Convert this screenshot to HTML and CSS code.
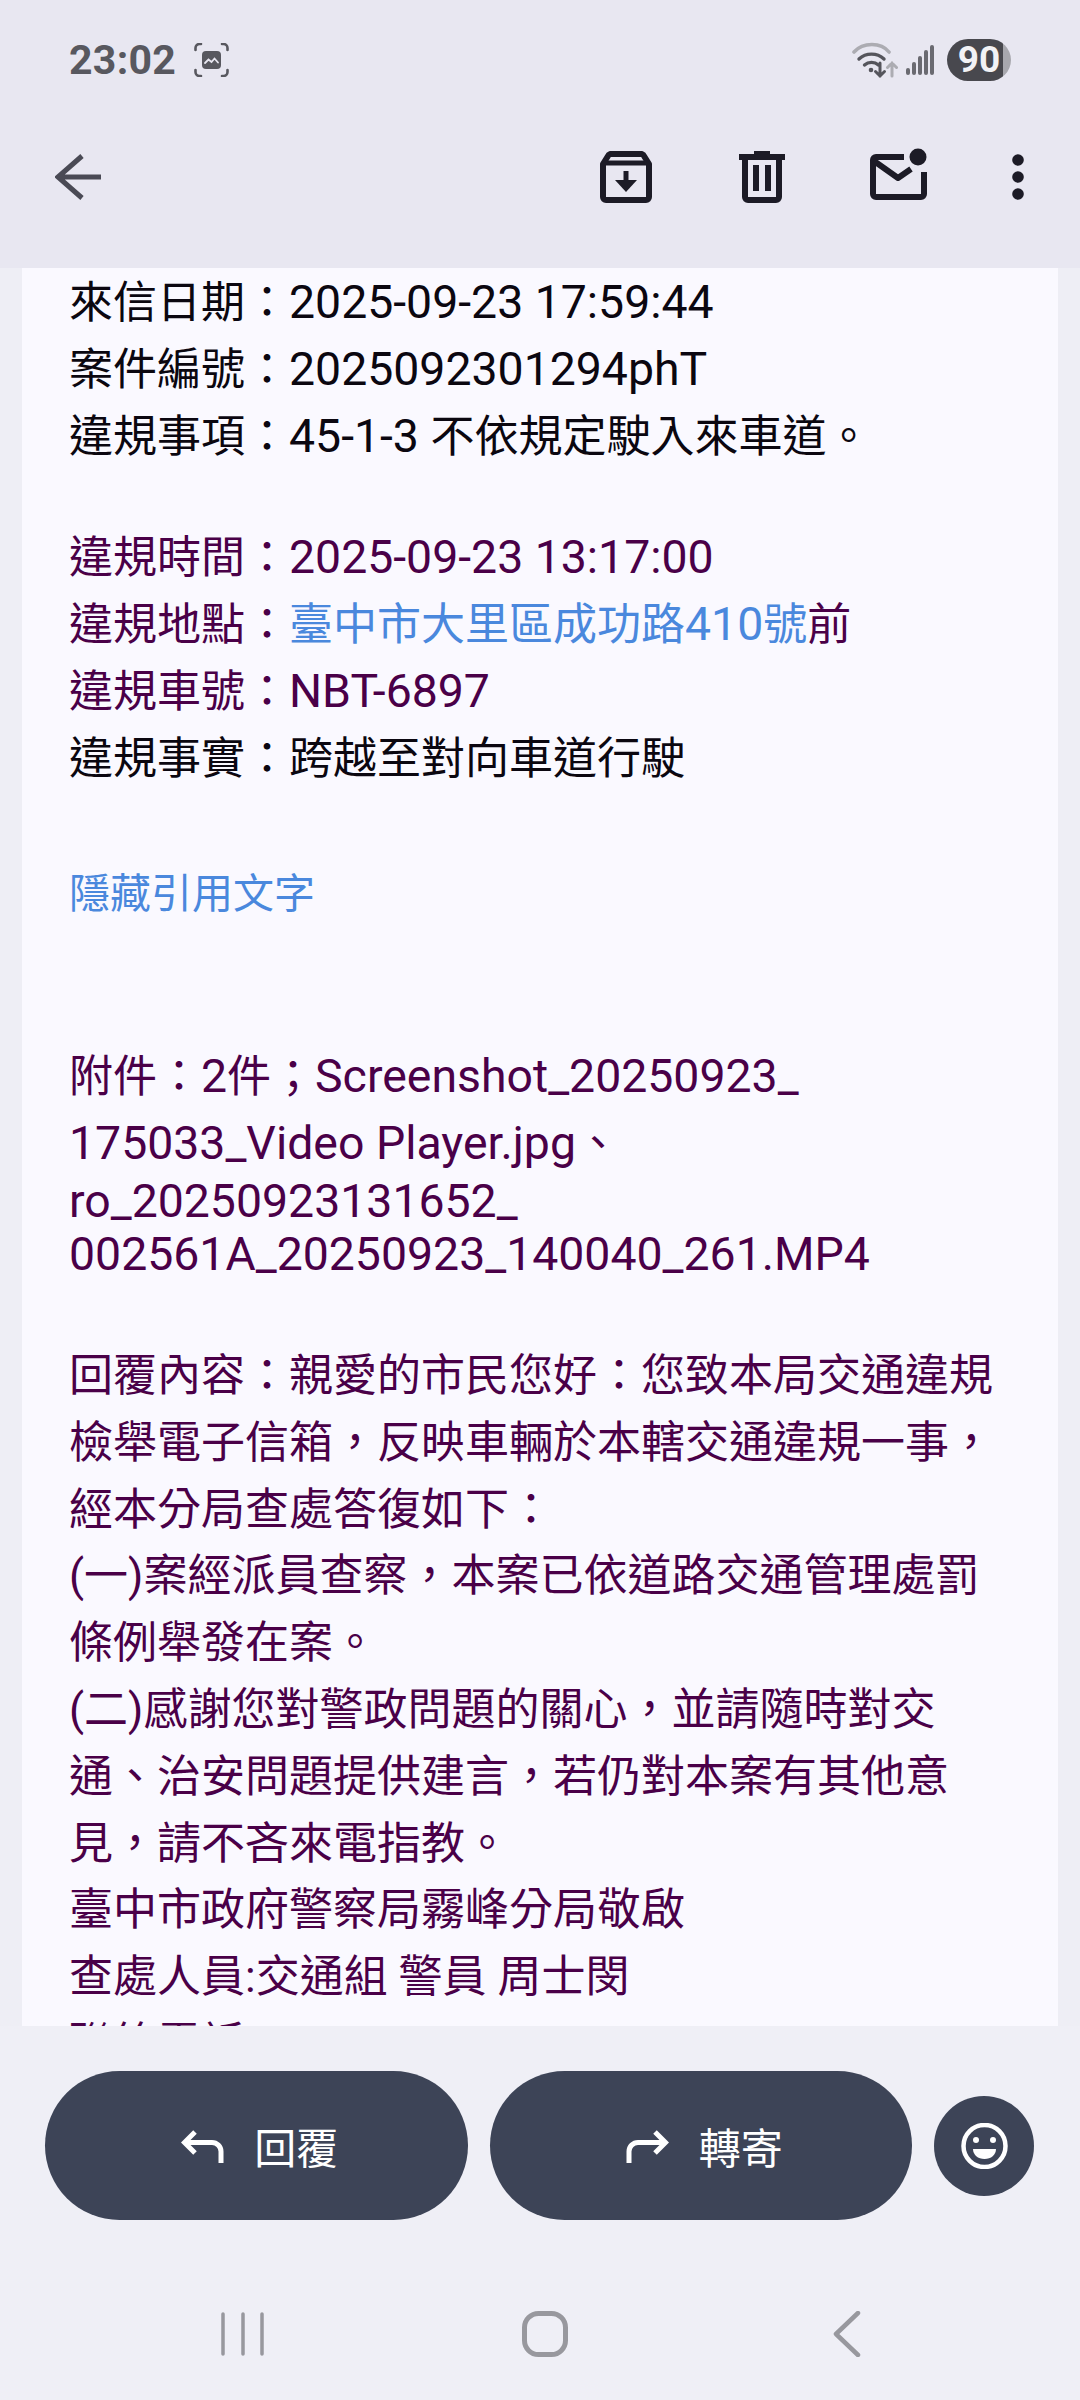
FILE: index.html
```html
<!DOCTYPE html>
<html lang="zh-Hant">
<head>
<meta charset="utf-8">
<title>郵件</title>
<link rel="stylesheet" href="styles.css">
</head>
<body>
<div class="page">
  <header class="header">
    <div class="status">
      <span class="time">23:02</span>
      <svg class="shot" width="35" height="34" viewBox="0 0 35 34" fill="none" stroke="#58585f" stroke-width="2.6" stroke-linecap="round">
        <path d="M1.500 7V5a4 4 0 0 1 4-4H7M28 1h1.500a4 4 0 0 1 4 4v2M33.500 27v2a4 4 0 0 1-4 4H28M7 33H5.500a4 4 0 0 1-4-4v-2"/>
        <rect x="8" y="8" width="19" height="18" rx="4" fill="#58585f" stroke="none"/>
        <path d="M11 20l3.500-3.500 3 2.500 3-3.500 3.500 4" stroke="#e8e7f1" stroke-width="1.800"/>
      </svg>
      <span class="status-right">
        <svg class="wifi" width="46" height="38" viewBox="0 0 46 38" fill="none" stroke-linecap="round">
          <path d="M2 11C11 1 29 1 37 11" stroke="#acacb2" stroke-width="3.600"/>
          <path d="M7 18c7-6.500 18-6.500 25 0M12.500 24c4-3.500 10-3.500 14 0" stroke="#55555c" stroke-width="3.400"/>
          <circle cx="19" cy="29" r="2.300" fill="#55555c"/>
          <path d="M28 22v13M23.500 30.500l4.500 4.500 4.500-4.500" stroke="#55555c" stroke-width="3"/>
          <path d="M40 35V22M35.500 26.500l4.500-4.500 4.500 4.500" stroke="#acacb2" stroke-width="3"/>
        </svg>
        <svg class="signal" width="28" height="30" viewBox="0 0 28 30" fill="#6a6a71">
          <rect x="0" y="23" width="4" height="7" rx="2"/>
          <rect x="6" y="17" width="4" height="13" rx="2"/>
          <rect x="12" y="11" width="4" height="19" rx="2"/>
          <rect x="18" y="5" width="4" height="25" rx="2"/>
          <rect x="24" y="0" width="4" height="30" rx="2"/>
        </svg>
        <span class="battery">90</span>
      </span>
    </div>
    <div class="toolbar">
      <svg class="back" width="46" height="46" viewBox="0 0 46 46" fill="none" stroke="#4a4a55" stroke-width="5" stroke-linejoin="miter">
        <path d="M27 2L3 23l24 21M3 23h43"/>
      </svg>
      <svg class="archive" width="52" height="52" viewBox="0 0 52 52" fill="none" stroke="#1c1b26" stroke-width="6">
        <path d="M3 13l5-8a3 3 0 0 1 2-2h32a3 3 0 0 1 2 2l5 8v33a3 3 0 0 1-3 3H6a3 3 0 0 1-3-3z" stroke-linejoin="round"/>
        <path d="M3 12h46" stroke-width="5"/>
        <path d="M26 20v16" stroke-width="5"/>
        <path d="M15 29h22L26 41z" fill="#1c1b26" stroke="none"/>
      </svg>
      <svg class="trash" width="46" height="52" viewBox="0 0 46 52" fill="none" stroke="#1c1b26" stroke-width="6">
        <path d="M0 6h46" />
        <path d="M15 2h16" stroke-width="4"/>
        <path d="M6 8v38a3 3 0 0 0 3 3h28a3 3 0 0 0 3-3V8"/>
        <path d="M17 14v26M29 14v26"/>
      </svg>
      <svg class="mail" width="57" height="52" viewBox="0 0 57 52" fill="none" stroke="#1c1b26" stroke-width="6" stroke-linejoin="round">
        <path d="M34 9H6a3 3 0 0 0-3 3v34a3 3 0 0 0 3 3h45a3 3 0 0 0 3-3V24"/>
        <path d="M4 13l24 17 13-9"/>
        <circle cx="48" cy="9" r="8.500" fill="#1c1b26" stroke="none"/>
      </svg>
      <svg class="more" width="12" height="46" viewBox="0 0 12 46" fill="#1c1b26">
        <circle cx="6" cy="6" r="5.800"/>
        <circle cx="6" cy="23" r="5.800"/>
        <circle cx="6" cy="40" r="5.800"/>
      </svg>
    </div>
  </header>

  <main class="card">
    <div class="msg">
      <p class="para dark">來信日期：<span class="lat">2025-09-23 17:59:44</span><br>案件編號：<span class="lat">2025092301294phT</span><br>違規事項：<span class="lat">45-1-3 </span>不依規定駛入來車道。</p>
      <p class="para gap-first">違規時間：<span class="lat">2025-09-23 13:17:00</span><br>違規地點：<a class="link" href="#">臺中市大里區成功路<span class="lat">410</span>號</a>前<br>違規車號：<span class="lat">NBT-6897</span><br><span class="dark">違規事實：跨越至對向車道行駛</span></p>
      <p class="para gap-67"><a class="link small" href="#">隱藏引用文字</a></p>
      <p class="para gap-118">附件：<span class="lat">2</span>件；<span class="lat">Screenshot_20250923_</span><br><span class="lat">175033_Video Player.jpg</span>、</p>
      <p class="para tight"><span class="lat">ro_20250923131652_</span><br><span class="lat">002561A_20250923_140040_261.MP4</span></p>
      <p class="para gap-reply">回覆內容：親愛的市民您好：您致本局交通違規檢舉電子信箱，反映車輛於本轄交通違規一事，經本分局查處答復如下：<br>(一)案經派員查察，本案已依道路交通管理處罰條例舉發在案。<br>(二)感謝您對警政問題的關心，並請隨時對交通、治安問題提供建言，若仍對本案有其他意見，請不吝來電指教。<br>臺中市政府警察局霧峰分局敬啟<br>查處人員:交通組 警員 周士閔<br>聯絡電話</p>
    </div>
  </main>

  <footer class="footer">
    <div class="actions">
      <button class="pill" type="button">
        <svg width="43" height="34" viewBox="0 0 43 34" fill="none" stroke="#fff" stroke-width="5">
          <path d="M14 3L3.500 13.500 14 24M3.500 13.500H31a9 9 0 0 1 9 9V34"/>
        </svg>
        <span>回覆</span>
      </button>
      <button class="pill" type="button">
        <svg width="43" height="34" viewBox="0 0 43 34" fill="none" stroke="#fff" stroke-width="5">
          <path d="M29 3l10.500 10.500L29 24M39.500 13.500H12a9 9 0 0 0-9 9V34"/>
        </svg>
        <span>轉寄</span>
      </button>
      <button class="round" type="button" aria-label="表情">
        <svg width="47" height="46" viewBox="0 0 47 46" fill="none">
          <circle cx="23.500" cy="23" r="21" stroke="#fff" stroke-width="4.500"/>
          <circle cx="15" cy="17" r="3" fill="#fff"/>
          <circle cx="32" cy="17" r="3" fill="#fff"/>
          <path d="M12 26h23c0 6-5 10-11.500 10S12 32 12 26z" fill="#fff"/>
        </svg>
      </button>
    </div>
    <nav class="nav">
      <svg width="44" height="44" viewBox="0 0 44 44" fill="none" stroke="#98989e" stroke-width="3.500" stroke-linecap="round">
        <path d="M2 2v40M22 2v40M41 2v40"/>
      </svg>
      <svg width="46" height="46" viewBox="0 0 46 46" fill="none" stroke="#98989e" stroke-width="5">
        <rect x="2.500" y="2.500" width="41" height="41" rx="14"/>
      </svg>
      <svg width="28" height="46" viewBox="0 0 28 46" fill="none" stroke="#98989e" stroke-width="4.500" stroke-linecap="round" stroke-linejoin="round">
        <path d="M25 2L3 23l22 21"/>
      </svg>
    </nav>
  </footer>
</div>
</body>
</html>
```
FILE: styles.css
```css
* { box-sizing: border-box; }
html, body { margin: 0; padding: 0; }
body {
  width: 1080px;
  height: 2400px;
  overflow: hidden;
  background: #eeeef5;
  font-family: Roboto, "Noto Sans CJK TC", sans-serif;
}
.page {
  width: 1080px;
  height: 2400px;
  display: flex;
  flex-direction: column;
}
.header {
  height: 268px;
  flex: none;
  background: #e8e7f1;
}
.status {
  height: 120px;
  padding: 0 69px;
  display: flex;
  align-items: center;
}
.time {
  font-size: 41px;
  font-weight: 700;
  letter-spacing: 0.3px;
  color: #58585f;
}
.shot { margin-left: 18px; }
.status-right {
  margin-left: auto;
  display: flex;
  align-items: center;
}
.signal { margin-left: 8px; }
.battery {
  width: 64px;
  height: 42px;
  margin-left: 13px;
  border-radius: 21px;
  background: linear-gradient(to right, #48484e 88%, #a8a8ae 88%);
  color: #f2f2f5;
  font-size: 37px;
  font-weight: 700;
  line-height: 42px;
  text-align: center;
}
.toolbar {
  height: 112px;
  padding: 2px 0 0 55px;
  display: flex;
  align-items: center;
}
.archive { margin-left: auto; }
.trash { margin-left: 87px; }
.mail { margin-left: 85px; margin-top: -6px; }
.more { margin-left: 85px; margin-right: 56px; }
.card {
  flex: 1;
  min-height: 0;
  margin: 0 22px;
  overflow: hidden;
  background: #faf9ff;
}
.msg {
  padding: 2px 59px 0 47px;
  font-family: Roboto, "Noto Sans CJK TC", sans-serif;
  font-size: 44px;
  line-height: 66.800px;
  color: #4a0048;
}
.para { margin: 0; }
.lat { font-size: 46.400px; line-height: 0; }
.small { font-size: 41px; line-height: 0; }
.dark { color: #0b0710; }
.link { color: #4a88dd; text-decoration: none; }
.gap-first { margin-top: 55px; }
.gap-67 { margin-top: 67px; }
.gap-118 { margin-top: 118px; }
.gap-reply { margin-top: 60px; }
.tight { line-height: 53.500px; margin-top: -2px; }
.footer {
  height: 374px;
  flex: none;
  padding: 45px 46px 0 45px;
  background: #efeff6;
}
.actions {
  display: flex;
  align-items: center;
  gap: 22px;
}
.pill {
  width: 422.500px;
  height: 149px;
  flex: none;
  border: 0;
  padding: 0 0 0 7px;
  border-radius: 75px;
  background: #3d4457;
  color: #fff;
  font: 400 42px Roboto, "Noto Sans CJK TC", sans-serif;
  display: flex;
  align-items: center;
  justify-content: center;
  gap: 30px;
}
.round {
  width: 100px;
  height: 100px;
  flex: none;
  border: 0;
  padding: 0;
  border-radius: 50%;
  background: #3d4457;
  display: flex;
  align-items: center;
  justify-content: center;
}
.nav {
  margin-top: 91px;
  margin-left: 47px;
  width: 906px;
  display: grid;
  grid-template-columns: repeat(3, 302px);
  justify-items: center;
  align-items: center;
}
```
